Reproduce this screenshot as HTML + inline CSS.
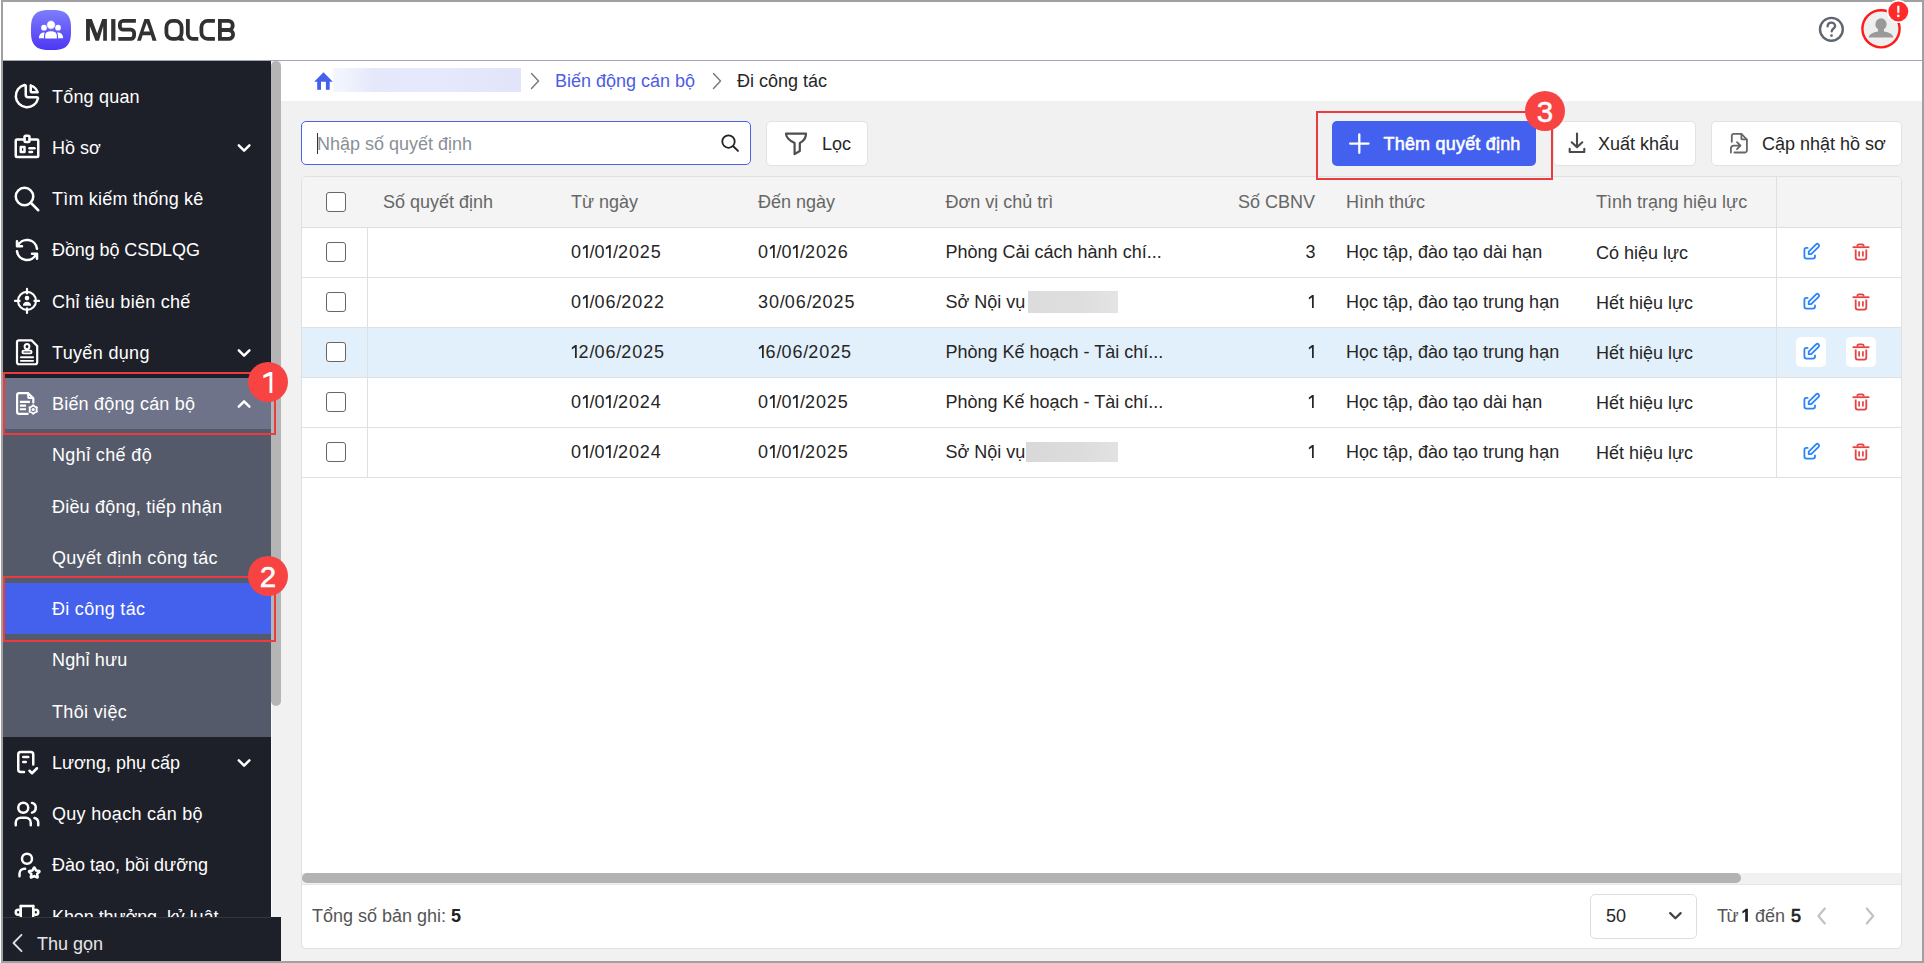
<!DOCTYPE html>
<html lang="vi"><head><meta charset="utf-8"><style>
*{box-sizing:border-box;margin:0;padding:0}
html,body{width:1924px;height:963px;overflow:hidden;background:#fff;font-family:"Liberation Sans",sans-serif;font-size:18px;color:#262626}
.a{position:absolute;white-space:nowrap}
.mt{color:#fff}
.badge{width:40px;height:40px;border-radius:20px;background:#f84343;color:#fff;font-size:29.5px;line-height:41px;text-align:center;-webkit-text-stroke:0.5px #fff}
</style></head><body>
<div class="a" style="left:0px;top:0px;width:1924px;height:963px;background:#fff"></div>
<div class="a" style="left:1px;top:0px;width:1923px;height:963px;border:2px solid #a0a0a0;background:#f1f1f1"></div>
<div class="a" style="left:3px;top:2px;width:1919px;height:58px;background:#fff"></div>
<div class="a" style="left:3px;top:60px;width:1919px;height:1px;background:#a4a5b5"></div>
<svg class="a" style="left:31px;top:10px" width="40" height="40" viewBox="0 0 40 40">
<defs><linearGradient id="lg" gradientUnits="userSpaceOnUse" x1="0" y1="0" x2="0" y2="40"><stop offset="0" stop-color="#7d7efc"/><stop offset="1" stop-color="#4d36f3"/></linearGradient></defs>
<path d="M40.00 20.00 L39.97 23.25 L39.89 25.15 L39.74 26.73 L39.54 28.12 L39.29 29.38 L38.97 30.54 L38.60 31.61 L38.17 32.60 L37.68 33.52 L37.14 34.37 L36.54 35.15 L35.87 35.87 L35.15 36.54 L34.37 37.14 L33.52 37.68 L32.60 38.17 L31.61 38.60 L30.54 38.97 L29.38 39.29 L28.12 39.54 L26.73 39.74 L25.15 39.89 L23.25 39.97 L20.00 40.00 L16.75 39.97 L14.85 39.89 L13.27 39.74 L11.88 39.54 L10.62 39.29 L9.46 38.97 L8.39 38.60 L7.40 38.17 L6.48 37.68 L5.63 37.14 L4.85 36.54 L4.13 35.87 L3.46 35.15 L2.86 34.37 L2.32 33.52 L1.83 32.60 L1.40 31.61 L1.03 30.54 L0.71 29.38 L0.46 28.12 L0.26 26.73 L0.11 25.15 L0.03 23.25 L0.00 20.00 L0.03 16.75 L0.11 14.85 L0.26 13.27 L0.46 11.88 L0.71 10.62 L1.03 9.46 L1.40 8.39 L1.83 7.40 L2.32 6.48 L2.86 5.63 L3.46 4.85 L4.13 4.13 L4.85 3.46 L5.63 2.86 L6.48 2.32 L7.40 1.83 L8.39 1.40 L9.46 1.03 L10.62 0.71 L11.88 0.46 L13.27 0.26 L14.85 0.11 L16.75 0.03 L20.00 0.00 L23.25 0.03 L25.15 0.11 L26.73 0.26 L28.12 0.46 L29.38 0.71 L30.54 1.03 L31.61 1.40 L32.60 1.83 L33.52 2.32 L34.37 2.86 L35.15 3.46 L35.87 4.13 L36.54 4.85 L37.14 5.63 L37.68 6.48 L38.17 7.40 L38.60 8.39 L38.97 9.46 L39.29 10.62 L39.54 11.88 L39.74 13.27 L39.89 14.85 L39.97 16.75Z" fill="url(#lg)"/>
<g fill="#fff">
<circle cx="13" cy="17.7" r="2.85"/><circle cx="27" cy="17.7" r="2.85"/>
<path d="M7.9 28.2C7.9 24.7 9.9 22.4 12.8 22.4 14.6 22.4 16 23.2 16.8 24.6V28.2Z"/>
<path d="M32.1 28.2C32.1 24.7 30.1 22.4 27.2 22.4 25.4 22.4 24 23.2 23.2 24.6V28.2Z"/>
<path d="M13.6 29.1V25.6C13.6 22.7 16.2 20.8 20 20.8S26.4 22.7 26.4 25.6V29.1Z" stroke="url(#lg)" stroke-width="1.1"/>
<circle cx="20" cy="14.9" r="4.3" stroke="url(#lg)" stroke-width="0.6"/>
</g></svg>
<svg class="a" style="left:80px;top:14px" width="160" height="32" viewBox="80 14 160 32"><g fill="#313131">
<path d="M86.05 40.75V19.07H91.8L97.2 33.4 102.2 19.07H106.9V40.75H103.2V26.2L98.9 40.75H95.5L89.9 26.2V40.75Z"/>
<rect x="111.2" y="19.07" width="4.2" height="21.68"/>
<path d="M137.1 40.75L144.4 19.07H149.3L156.6 40.75H152.5L150.9 35.2H142.6L140.9 40.75ZM143.6 31.6H149.8L146.7 22.9Z" fill-rule="evenodd"/>
<path d="M182 36.4L184.6 40.75H179.6L177.4 37.2Z"/>
</g><g fill="none" stroke="#313131" stroke-width="3.8">
<path d="M135.9 20.95H123.2a3.3 3.3 0 0 0 -3.3 3.3V26.4a3.3 3.3 0 0 0 3.3 3.3H130.8a3.3 3.3 0 0 1 3.3 3.3V35.5a3.3 3.3 0 0 1 -3.3 3.3H118.3"/>
<rect x="166.4" y="20.95" width="15.2" height="17.9" rx="6.2"/>
<path d="M187.85 19.07V33.8a5 5 0 0 0 5 5H198.3"/>
<path d="M214.9 20.95H207.6a6.2 6.2 0 0 0 -6.2 6.2V32.6a6.2 6.2 0 0 0 6.2 6.2H214.9"/>
<path d="M219.9 19.07V40.75M219.9 20.95H228.5a4.2 4.2 0 0 1 4.2 4.2v.65a4.2 4.2 0 0 1 -4.2 4.2H219.9M228 30H228.7a4.4 4.4 0 0 1 4.4 4.4v.05a4.4 4.4 0 0 1 -4.4 4.4H219.9"/>
</g></svg>
<svg class="a" style="left:1817px;top:15px" width="29" height="29" viewBox="0 0 29 29">
<circle cx="14.4" cy="14.3" r="11.4" fill="none" stroke="#5f6670" stroke-width="2.4"/>
<path d="M10.6 11.4c0-2.3 1.7-3.7 3.8-3.7s3.7 1.4 3.7 3.3c0 2.5-3.2 2.5-3.4 5.4" fill="none" stroke="#5f6670" stroke-width="2.3" stroke-linecap="round"/>
<circle cx="14.5" cy="20.6" r="1.4" fill="#5f6670"/></svg>
<svg class="a" style="left:1858px;top:6px" width="48" height="48" viewBox="1858 6 48 48">
<circle cx="1881" cy="28.8" r="18.6" fill="#efefef" stroke="#ff1a1a" stroke-width="2.4"/>
<ellipse cx="1881" cy="24.2" rx="5.6" ry="5.9" fill="#999"/>
<path d="M1868.6 37.4C1869.6 33.3 1874.6 31.4 1881 31.4S1892.4 33.3 1893.4 37.4Z" fill="#999"/>
<rect x="1878" y="27" width="6" height="5.5" fill="#999"/>
</svg>
<svg class="a" style="left:1886px;top:0px" width="26" height="24" viewBox="0 0 26 24">
<circle cx="12.3" cy="11.5" r="10.8" fill="#ff2b2b" stroke="#fff" stroke-width="1.6"/>
<rect x="11.2" y="5.6" width="2.2" height="7.6" rx="1.1" fill="#fff"/><circle cx="12.3" cy="15.9" r="1.3" fill="#fff"/>
</svg>
<div class="a" style="left:3px;top:61px;width:268px;height:856px;background:#1e2029"></div>
<div class="a" style="left:3px;top:378px;width:268px;height:51.25px;background:#6e7389"></div>
<div class="a" style="left:3px;top:429.25px;width:268px;height:307.5px;background:#545a69"></div>
<div class="a" style="left:3px;top:583px;width:268px;height:51.25px;background:#4361ec"></div>
<div class="a mt" style="left:52px;top:71.5px;height:51.25px;line-height:51.25px;letter-spacing:0.19px">Tổng quan</div>
<svg class="a" style="left:12px;top:81.1px" width="30" height="30" viewBox="0 0 24 24" fill="none" stroke="#fff" stroke-width="2" stroke-linecap="round" stroke-linejoin="round"><path d="M10 3.2a9 9 0 1 0 10.8 10.8a1 1 0 0 0 -1 -1h-6.8a2 2 0 0 1 -2 -2v-7a.9 .9 0 0 0 -1 -.8"/><path d="M15 3.5a9 9 0 0 1 5.5 5.5h-4.5a1 1 0 0 1 -1 -1v-4.5"/></svg>
<div class="a mt" style="left:52px;top:122.75px;height:51.25px;line-height:51.25px;letter-spacing:0px">Hồ sơ</div>
<svg class="a" style="left:12px;top:132.35px" width="30" height="30" viewBox="0 0 24 24" fill="none" stroke="#fff" stroke-width="2" stroke-linecap="round" stroke-linejoin="round"><path d="M7 12h3v4h-3z"/><path d="M10 6h-6a1 1 0 0 0 -1 1v12a1 1 0 0 0 1 1h16a1 1 0 0 0 1 -1v-12a1 1 0 0 0 -1 -1h-6"/><path d="M10 4a1 1 0 0 1 1 -1h2a1 1 0 0 1 1 1v3a1 1 0 0 1 -1 1h-2a1 1 0 0 1 -1 -1z"/><path d="M14 13h4"/><path d="M14 16h2"/></svg>
<svg class="a" style="left:231.8px;top:135.75px" width="24" height="24" viewBox="0 0 24 24"><path d="M6.8 9.3l5.3 5.3l5.3 -5.3" fill="none" stroke="#fff" stroke-width="2.5" stroke-linecap="round" stroke-linejoin="round"/></svg>
<div class="a mt" style="left:52px;top:174.0px;height:51.25px;line-height:51.25px;letter-spacing:0.2px">Tìm kiếm thống kê</div>
<svg class="a" style="left:12px;top:183.6px" width="30" height="30" viewBox="0 0 24 24" fill="none" stroke="#fff" stroke-width="2" stroke-linecap="round" stroke-linejoin="round"><circle cx="10" cy="10" r="7"/><path d="M21 21l-6 -6"/></svg>
<div class="a mt" style="left:52px;top:225.25px;height:51.25px;line-height:51.25px;letter-spacing:-0.09px">Đồng bộ CSDLQG</div>
<svg class="a" style="left:12px;top:234.85px" width="30" height="30" viewBox="0 0 24 24" fill="none" stroke="#fff" stroke-width="2" stroke-linecap="round" stroke-linejoin="round"><path d="M20 11a8.1 8.1 0 0 0 -15.5 -2m-.5 -4v4h4"/><path d="M4 13a8.1 8.1 0 0 0 15.5 2m.5 4v-4h-4"/></svg>
<div class="a mt" style="left:52px;top:276.5px;height:51.25px;line-height:51.25px;letter-spacing:0.26px">Chỉ tiêu biên chế</div>
<svg class="a" style="left:8px;top:275.5px" width="40" height="51.25" viewBox="8 275.5 40 51.25" fill="none" stroke="#fff" stroke-width="2" stroke-linecap="round" stroke-linejoin="round"><circle cx="27" cy="300.4" r="9" stroke-width="2.1"/><path d="M27 288.4v4.6M27 307.8v4.6M15 300.4h4.6M34.4 300.4h4.6" stroke-width="2.2"/><circle cx="27" cy="297.6" r="2.3" fill="#fff" stroke="none"/><path d="M22.9 305.3c0-2.6 1.8-4 4.1-4s4.1 1.4 4.1 4z" fill="#fff" stroke="none"/></svg>
<div class="a mt" style="left:52px;top:327.75px;height:51.25px;line-height:51.25px;letter-spacing:0.34px">Tuyển dụng</div>
<svg class="a" style="left:8px;top:326.75px" width="40" height="51.25" viewBox="8 326.75 40 51.25" fill="none" stroke="#fff" stroke-width="2" stroke-linecap="round" stroke-linejoin="round"><path d="M17 342.1a2 2 0 0 1 2 -2h12.6l5.6 5.6v16.3a2 2 0 0 1 -2 2H19a2 2 0 0 1 -2 -2z" stroke-width="2.2"/><ellipse cx="27" cy="346.3" rx="2.4" ry="2.6" stroke-width="2"/><rect x="22.4" y="350.4" width="9.2" height="2.7" rx="1.35" stroke-width="1.9"/><path d="M20.9 357h12.2M20.9 360.6h12.2" stroke-width="1.9"/></svg>
<svg class="a" style="left:231.8px;top:340.75px" width="24" height="24" viewBox="0 0 24 24"><path d="M6.8 9.3l5.3 5.3l5.3 -5.3" fill="none" stroke="#fff" stroke-width="2.5" stroke-linecap="round" stroke-linejoin="round"/></svg>
<div class="a mt" style="left:52px;top:379.0px;height:51.25px;line-height:51.25px;letter-spacing:0.19px">Biến động cán bộ</div>
<svg class="a" style="left:8px;top:378.0px" width="40" height="51.25" viewBox="8 378.0 40 51.25" fill="none" stroke="#fff" stroke-width="2" stroke-linecap="round" stroke-linejoin="round"><path d="M27.6 413.9H19.2a2.1 2.1 0 0 1 -2.1 -2.1V395.3a2.1 2.1 0 0 1 2.1 -2.1h9l5.1 5.1v4.3" stroke-width="2.2"/><path d="M28.2 393.4v3.8a.8 .8 0 0 0 .8 .8h4.1" stroke-width="2"/><path d="M19.9 401.9h10M19.9 405.6h6.1M19.9 409.2h6.1" stroke-width="2.1" stroke-linecap="butt"/><path d="M33.20,405.20 L34.85,406.64 L36.92,407.35 L36.50,409.50 L36.92,411.65 L34.85,412.36 L33.20,413.80 L31.55,412.36 L29.48,411.65 L29.90,409.50 L29.48,407.35 L31.55,406.64Z" stroke-width="1.9"/><circle cx="33.2" cy="409.5" r="1.6" fill="#fff" stroke="none"/></svg>
<svg class="a" style="left:231.8px;top:391.8px" width="24" height="24" viewBox="0 0 24 24"><path d="M6.8 14.7l5.3 -5.3l5.3 5.3" fill="none" stroke="#fff" stroke-width="2.5" stroke-linecap="round" stroke-linejoin="round"/></svg>
<div class="a mt" style="left:52px;top:430.25px;height:51.25px;line-height:51.25px;letter-spacing:0.37px">Nghỉ chế độ</div>
<div class="a mt" style="left:52px;top:481.5px;height:51.25px;line-height:51.25px;letter-spacing:0.2px">Điều động, tiếp nhận</div>
<div class="a mt" style="left:52px;top:532.75px;height:51.25px;line-height:51.25px;letter-spacing:0.3px">Quyết định công tác</div>
<div class="a mt" style="left:52px;top:584.0px;height:51.25px;line-height:51.25px;letter-spacing:0.29px">Đi công tác</div>
<div class="a mt" style="left:52px;top:635.25px;height:51.25px;line-height:51.25px;letter-spacing:0.17px">Nghỉ hưu</div>
<div class="a mt" style="left:52px;top:686.5px;height:51.25px;line-height:51.25px;letter-spacing:0.35px">Thôi việc</div>
<div class="a mt" style="left:52px;top:737.75px;height:51.25px;line-height:51.25px;letter-spacing:0px">Lương, phụ cấp</div>
<svg class="a" style="left:12px;top:747.35px" width="30" height="30" viewBox="0 0 24 24" fill="none" stroke="#fff" stroke-width="2" stroke-linecap="round" stroke-linejoin="round"><path d="M9.615 20h-2.615a2 2 0 0 1 -2 -2v-12a2 2 0 0 1 2 -2h8a2 2 0 0 1 2 2v8"/><path d="M14 19l2 2l4 -4"/><path d="M9 8h4"/><path d="M9 12h2"/></svg>
<svg class="a" style="left:231.8px;top:750.75px" width="24" height="24" viewBox="0 0 24 24"><path d="M6.8 9.3l5.3 5.3l5.3 -5.3" fill="none" stroke="#fff" stroke-width="2.5" stroke-linecap="round" stroke-linejoin="round"/></svg>
<div class="a mt" style="left:52px;top:789.0px;height:51.25px;line-height:51.25px;letter-spacing:0.3px">Quy hoạch cán bộ</div>
<svg class="a" style="left:12px;top:798.6px" width="30" height="30" viewBox="0 0 24 24" fill="none" stroke="#fff" stroke-width="2" stroke-linecap="round" stroke-linejoin="round"><circle cx="9" cy="7" r="4"/><path d="M3 21v-2a4 4 0 0 1 4 -4h4a4 4 0 0 1 4 4v2"/><path d="M16 3.13a4 4 0 0 1 0 7.75"/><path d="M21 21v-2a4 4 0 0 0 -3 -3.85"/></svg>
<div class="a mt" style="left:52px;top:840.25px;height:51.25px;line-height:51.25px;letter-spacing:0px">Đào tạo, bồi dưỡng</div>
<svg class="a" style="left:12px;top:849.85px" width="30" height="30" viewBox="0 0 24 24" fill="none" stroke="#fff" stroke-width="2" stroke-linecap="round" stroke-linejoin="round"><path d="M8 7a4 4 0 1 0 8 0a4 4 0 0 0 -8 0"/><path d="M6 21v-2a4 4 0 0 1 4 -4h.5"/><path d="M17.8 20.817l-2.172 1.138a.392 .392 0 0 1 -.568 -.41l.415 -2.411l-1.757 -1.707a.389 .389 0 0 1 .217 -.665l2.428 -.352l1.086 -2.193a.392 .392 0 0 1 .702 0l1.086 2.193l2.428 .352a.39 .39 0 0 1 .217 .665l-1.757 1.707l.414 2.41a.39 .39 0 0 1 -.567 .411z"/></svg>
<div class="a mt" style="left:52px;top:891.5px;height:51.25px;line-height:51.25px;letter-spacing:-0.08px">Khen thưởng, kỷ luật</div>
<svg class="a" style="left:12px;top:901.1px" width="30" height="30" viewBox="0 0 24 24" fill="none" stroke="#fff" stroke-width="2" stroke-linecap="round" stroke-linejoin="round"><path d="M8 21l8 0"/><path d="M12 17l0 4"/><path d="M7 4l10 0"/><path d="M17 4v8a5 5 0 0 1 -10 0v-8"/><circle cx="5" cy="9" r="2"/><circle cx="19" cy="9" r="2"/></svg>
<div class="a" style="left:271px;top:61px;width:10px;height:856px;background:#f1f1f1"></div>
<div class="a" style="left:271px;top:61px;width:1px;height:856px;background:#fafafa"></div>
<div class="a" style="left:271px;top:61px;width:10px;height:645px;background:#b5b5b5;border-radius:5px"></div>
<div class="a" style="left:3px;top:917px;width:278px;height:44px;background:#1e2029"></div>
<div class="a" style="left:3px;top:917px;width:268px;height:1px;background:#34363d"></div>
<svg class="a" style="left:11px;top:933px" width="14" height="20" viewBox="0 0 14 20"><path d="M10.5 1.8L2.5 10l8 8.2" fill="none" stroke="#e0e0e0" stroke-width="1.8" stroke-linecap="round" stroke-linejoin="round"/></svg>
<div class="a" style="left:37px;top:922px;line-height:44px;color:#e6e6e6">Thu gọn</div>
<div class="a" style="left:281px;top:61px;width:1641px;height:40px;background:#fff"></div>
<svg class="a" style="left:313px;top:71px" width="21" height="20" viewBox="0 0 21 20"><path d="M1.2 10.8L10.5 1.2 19.8 10.8z" fill="#4361ee"/><rect x="4.2" y="10" width="3.8" height="8.8" fill="#4361ee"/><rect x="12.9" y="10" width="3.8" height="8.8" fill="#4361ee"/></svg>
<div class="a" style="left:333px;top:68px;width:188px;height:24px;background:linear-gradient(90deg,#f5f7fe 0%,#e5e8fa 22%,#e6e9fb 55%,#e2e5f9 100%)"></div>
<svg class="a" style="left:530px;top:72px" width="10" height="18" viewBox="0 0 10 18"><path d="M1.5 1.5L8.5 9l-7 7.5" fill="none" stroke="#777" stroke-width="1.4" stroke-linecap="round" stroke-linejoin="round"/></svg>
<div class="a" style="left:555px;top:61px;line-height:40px;color:#4c5ce5">Biến động cán bộ</div>
<svg class="a" style="left:712px;top:72px" width="10" height="18" viewBox="0 0 10 18"><path d="M1.5 1.5L8.5 9l-7 7.5" fill="none" stroke="#777" stroke-width="1.4" stroke-linecap="round" stroke-linejoin="round"/></svg>
<div class="a" style="left:737px;top:61px;line-height:40px;color:#262626">Đi công tác</div>
<div class="a" style="left:301px;top:121px;width:450px;height:44px;background:#fff;border:1px solid #4a63e8;border-radius:5px"></div>
<div class="a" style="left:317px;top:133px;width:1px;height:21px;background:#333"></div>
<div class="a" style="left:317px;top:122px;line-height:44px;color:#8b8f97">Nhập số quyết định</div>
<svg class="a" style="left:719px;top:132px" width="22" height="22" viewBox="0 0 22 22"><circle cx="9.5" cy="9.6" r="6.2" fill="none" stroke="#222" stroke-width="1.8"/><path d="M14.2 14.3l4.8 4.6" stroke="#222" stroke-width="1.9" stroke-linecap="round"/></svg>
<div class="a" style="left:766px;top:121px;width:102px;height:45px;background:#fff;border:1px solid #e3e3e3;border-radius:5px"></div>
<svg class="a" style="left:783px;top:131px" width="26" height="26" viewBox="0 0 26 26"><path d="M3 2.6h20c0 5.6-3.3 8-6.2 9.4v8l-5.2 3.1V12C8.6 10.6 3 8.2 3 2.6z" fill="none" stroke="#4e4e4e" stroke-width="2.2" stroke-linejoin="round"/></svg>
<div class="a" style="left:822px;top:122px;line-height:44px;color:#262626">Lọc</div>
<div class="a" style="left:1332px;top:121px;width:204px;height:45px;background:#4361ee;border-radius:5px"></div>
<svg class="a" style="left:1340px;top:125px" width="40" height="40" viewBox="1340 125 40 40"><path d="M1359.3 134.4V152.8M1350.1 143.6H1368.5" stroke="#fff" stroke-width="2.3" stroke-linecap="round"/></svg>
<div class="a" style="left:1383.5px;top:121.5px;line-height:44px;color:#fff;font-size:18px;-webkit-text-stroke:0.55px #fff;letter-spacing:0.2px">Thêm quyết định</div>
<div class="a" style="left:1553px;top:121px;width:143px;height:45px;background:#fff;border:1px solid #e3e3e3;border-radius:5px"></div>
<svg class="a" style="left:1560px;top:125px" width="40" height="40" viewBox="1560 125 40 40"><path d="M1577 133.6V147M1571.7 142.3L1577 147.3 1582.3 142.3M1569.7 148.8V152H1584.3V148.8" fill="none" stroke="#4a4a4a" stroke-width="2.1" stroke-linecap="round" stroke-linejoin="round"/></svg>
<div class="a" style="left:1598px;top:122px;line-height:44px;color:#262626">Xuất khẩu</div>
<div class="a" style="left:1711px;top:121px;width:191px;height:45px;background:#fff;border:1px solid #e3e3e3;border-radius:5px"></div>
<svg class="a" style="left:1720px;top:125px" width="40" height="40" viewBox="1720 125 40 40"><g fill="none" stroke="#666" stroke-width="1.8" stroke-linecap="round" stroke-linejoin="round"><path d="M1731.8 141.8V135.8a1.9 1.9 0 0 1 1.9 -1.9H1741.4L1746.9 139.6V150.6a1.9 1.9 0 0 1 -1.9 1.9H1734.4"/><path d="M1741.4 134.1V138.4a1 1 0 0 0 1 1H1746.7"/><path d="M1730.9 152.6V148.7a3 3 0 0 1 3 -3H1740.3M1737 142.2L1740.5 145.7 1737 149.2"/></g></svg>
<div class="a" style="left:1762px;top:122px;line-height:44px;color:#262626">Cập nhật hồ sơ</div>
<div class="a" style="left:301px;top:176px;width:1601px;height:773px;background:#fff;border:1px solid #e0e0e0;border-radius:5px"></div>
<div class="a" style="left:302px;top:177px;width:1599px;height:50px;background:#f4f4f4;border-radius:4px 4px 0 0"></div>
<div class="a" style="left:302px;top:227px;width:1599px;height:1px;background:#dedede"></div>
<div class="a" style="left:326px;top:192px;width:20px;height:20px;border:1px solid #666;border-radius:3px;background:#fff"></div>
<div class="a" style="left:383px;top:177px;line-height:50px;color:#666">Số quyết định</div>
<div class="a" style="left:571px;top:177px;line-height:50px;color:#666">Từ ngày</div>
<div class="a" style="left:758px;top:177px;line-height:50px;color:#666">Đến ngày</div>
<div class="a" style="left:945.5px;top:177px;line-height:50px;color:#666">Đơn vị chủ trì</div>
<div class="a" style="left:1346px;top:177px;line-height:50px;color:#666">Hình thức</div>
<div class="a" style="left:1596px;top:177px;line-height:50px;color:#666">Tình trạng hiệu lực</div>
<div class="a" style="left:1115px;width:200px;text-align:right;top:177px;line-height:50px;color:#666">Số CBNV</div>
<div class="a" style="left:1776px;top:177px;width:1px;height:50px;background:#e0e0e0"></div>
<div class="a" style="left:302px;top:228px;width:1599px;height:49px;background:#fff"></div>
<div class="a" style="left:302px;top:277px;width:1599px;height:1px;background:#e0e0e0"></div>
<div class="a" style="left:367px;top:228px;width:1px;height:49px;background:#e0e0e0"></div>
<div class="a" style="left:1776px;top:228px;width:1px;height:49px;background:#e0e0e0"></div>
<div class="a" style="left:326px;top:242px;width:20px;height:20px;border:1px solid #666;border-radius:3px;background:#fff"></div>
<div class="a" style="left:571px;top:228px;line-height:49px"><span style="letter-spacing:0.89px">0</span><svg style="display:inline-block;vertical-align:baseline" width="7.6" height="13" viewBox="0 0 7.6 13"><path d="M4 0H5.75V13H4V2.5L0.85 4.5V2.5L3.8 0.2Z" fill="#262626"/></svg>/<span style="letter-spacing:0.89px">0</span><svg style="display:inline-block;vertical-align:baseline" width="7.6" height="13" viewBox="0 0 7.6 13"><path d="M4 0H5.75V13H4V2.5L0.85 4.5V2.5L3.8 0.2Z" fill="#262626"/></svg>/<span style="letter-spacing:0.89px">2</span><span style="letter-spacing:0.89px">0</span><span style="letter-spacing:0.89px">2</span><span style="letter-spacing:0.89px">5</span></div>
<div class="a" style="left:758px;top:228px;line-height:49px"><span style="letter-spacing:0.89px">0</span><svg style="display:inline-block;vertical-align:baseline" width="7.6" height="13" viewBox="0 0 7.6 13"><path d="M4 0H5.75V13H4V2.5L0.85 4.5V2.5L3.8 0.2Z" fill="#262626"/></svg>/<span style="letter-spacing:0.89px">0</span><svg style="display:inline-block;vertical-align:baseline" width="7.6" height="13" viewBox="0 0 7.6 13"><path d="M4 0H5.75V13H4V2.5L0.85 4.5V2.5L3.8 0.2Z" fill="#262626"/></svg>/<span style="letter-spacing:0.89px">2</span><span style="letter-spacing:0.89px">0</span><span style="letter-spacing:0.89px">2</span><span style="letter-spacing:0.89px">6</span></div>
<div class="a" style="left:945.5px;top:228px;line-height:49px">Phòng Cải cách hành chí...</div>
<div class="a" style="left:1346px;top:228px;line-height:49px">Học tập, đào tạo dài hạn</div>
<div class="a" style="left:1596px;top:229px;line-height:49px">Có hiệu lực</div>
<div class="a" style="left:1215px;width:100.5px;text-align:right;top:228px;line-height:49px">3</div>
<svg class="a" style="left:1795px;top:228px" width="80" height="50" viewBox="1795 228 80 50"><g fill="none" stroke="#2a86f7" stroke-width="1.8" stroke-linecap="round" stroke-linejoin="round"><path d="M1807.6 247.9H1806.4a2 2 0 0 0 -2 2V256.6a2 2 0 0 0 2 2H1813a2 2 0 0 0 2 -2V255.4"/><path d="M1808.7 254.2v-2.5l7.4 -7.4a1.75 1.75 0 0 1 2.5 2.5l-7.4 7.4z"/></g><g fill="none" stroke="#e84141" stroke-width="1.8"><path d="M1852.6 247.2H1869.4"/><path d="M1857.3 246.6v-.4a1.8 1.8 0 0 1 1.8 -1.8h2.8a1.8 1.8 0 0 1 1.8 1.8v.4"/><path d="M1855.7 249.4V257.6a2 2 0 0 0 2 2h6.6a2 2 0 0 0 2 -2V249.4"/><path d="M1859.1 251.2v5.4M1862.9 251.2v5.4" stroke-width="1.7"/></g></svg>
<div class="a" style="left:302px;top:278px;width:1599px;height:49px;background:#fff"></div>
<div class="a" style="left:302px;top:327px;width:1599px;height:1px;background:#e0e0e0"></div>
<div class="a" style="left:367px;top:278px;width:1px;height:49px;background:#e0e0e0"></div>
<div class="a" style="left:1776px;top:278px;width:1px;height:49px;background:#e0e0e0"></div>
<div class="a" style="left:326px;top:292px;width:20px;height:20px;border:1px solid #666;border-radius:3px;background:#fff"></div>
<div class="a" style="left:571px;top:278px;line-height:49px"><span style="letter-spacing:0.89px">0</span><svg style="display:inline-block;vertical-align:baseline" width="7.6" height="13" viewBox="0 0 7.6 13"><path d="M4 0H5.75V13H4V2.5L0.85 4.5V2.5L3.8 0.2Z" fill="#262626"/></svg>/<span style="letter-spacing:0.89px">0</span><span style="letter-spacing:0.89px">6</span>/<span style="letter-spacing:0.89px">2</span><span style="letter-spacing:0.89px">0</span><span style="letter-spacing:0.89px">2</span><span style="letter-spacing:0.89px">2</span></div>
<div class="a" style="left:758px;top:278px;line-height:49px"><span style="letter-spacing:0.89px">3</span><span style="letter-spacing:0.89px">0</span>/<span style="letter-spacing:0.89px">0</span><span style="letter-spacing:0.89px">6</span>/<span style="letter-spacing:0.89px">2</span><span style="letter-spacing:0.89px">0</span><span style="letter-spacing:0.89px">2</span><span style="letter-spacing:0.89px">5</span></div>
<div class="a" style="left:945.5px;top:278px;line-height:49px">Sở Nội vụ</div>
<div class="a" style="left:1346px;top:278px;line-height:49px">Học tập, đào tạo trung hạn</div>
<div class="a" style="left:1596px;top:279px;line-height:49px">Hết hiệu lực</div>
<div class="a" style="left:1215px;width:100.2px;text-align:right;top:278px;line-height:49px"><svg style="display:inline-block;vertical-align:baseline" width="7.6" height="13" viewBox="0 0 7.6 13"><path d="M4 0H5.75V13H4V2.5L0.85 4.5V2.5L3.8 0.2Z" fill="#262626"/></svg></div>
<div class="a" style="left:1028px;top:291px;width:90px;height:22px;background:linear-gradient(90deg,#dcdcdc,#dedede 60%,#e4e4e4)"></div>
<svg class="a" style="left:1795px;top:278px" width="80" height="50" viewBox="1795 228 80 50"><g fill="none" stroke="#2a86f7" stroke-width="1.8" stroke-linecap="round" stroke-linejoin="round"><path d="M1807.6 247.9H1806.4a2 2 0 0 0 -2 2V256.6a2 2 0 0 0 2 2H1813a2 2 0 0 0 2 -2V255.4"/><path d="M1808.7 254.2v-2.5l7.4 -7.4a1.75 1.75 0 0 1 2.5 2.5l-7.4 7.4z"/></g><g fill="none" stroke="#e84141" stroke-width="1.8"><path d="M1852.6 247.2H1869.4"/><path d="M1857.3 246.6v-.4a1.8 1.8 0 0 1 1.8 -1.8h2.8a1.8 1.8 0 0 1 1.8 1.8v.4"/><path d="M1855.7 249.4V257.6a2 2 0 0 0 2 2h6.6a2 2 0 0 0 2 -2V249.4"/><path d="M1859.1 251.2v5.4M1862.9 251.2v5.4" stroke-width="1.7"/></g></svg>
<div class="a" style="left:302px;top:328px;width:1599px;height:49px;background:#e2f0fb"></div>
<div class="a" style="left:302px;top:377px;width:1599px;height:1px;background:#e0e0e0"></div>
<div class="a" style="left:367px;top:328px;width:1px;height:49px;background:#e0e0e0"></div>
<div class="a" style="left:1776px;top:328px;width:1px;height:49px;background:#e0e0e0"></div>
<div class="a" style="left:326px;top:342px;width:20px;height:20px;border:1px solid #666;border-radius:3px;background:#fff"></div>
<div class="a" style="left:571px;top:328px;line-height:49px"><svg style="display:inline-block;vertical-align:baseline" width="7.6" height="13" viewBox="0 0 7.6 13"><path d="M4 0H5.75V13H4V2.5L0.85 4.5V2.5L3.8 0.2Z" fill="#262626"/></svg><span style="letter-spacing:0.89px">2</span>/<span style="letter-spacing:0.89px">0</span><span style="letter-spacing:0.89px">6</span>/<span style="letter-spacing:0.89px">2</span><span style="letter-spacing:0.89px">0</span><span style="letter-spacing:0.89px">2</span><span style="letter-spacing:0.89px">5</span></div>
<div class="a" style="left:758px;top:328px;line-height:49px"><svg style="display:inline-block;vertical-align:baseline" width="7.6" height="13" viewBox="0 0 7.6 13"><path d="M4 0H5.75V13H4V2.5L0.85 4.5V2.5L3.8 0.2Z" fill="#262626"/></svg><span style="letter-spacing:0.89px">6</span>/<span style="letter-spacing:0.89px">0</span><span style="letter-spacing:0.89px">6</span>/<span style="letter-spacing:0.89px">2</span><span style="letter-spacing:0.89px">0</span><span style="letter-spacing:0.89px">2</span><span style="letter-spacing:0.89px">5</span></div>
<div class="a" style="left:945.5px;top:328px;line-height:49px">Phòng Kế hoạch - Tài chí...</div>
<div class="a" style="left:1346px;top:328px;line-height:49px">Học tập, đào tạo trung hạn</div>
<div class="a" style="left:1596px;top:329px;line-height:49px">Hết hiệu lực</div>
<div class="a" style="left:1215px;width:100.2px;text-align:right;top:328px;line-height:49px"><svg style="display:inline-block;vertical-align:baseline" width="7.6" height="13" viewBox="0 0 7.6 13"><path d="M4 0H5.75V13H4V2.5L0.85 4.5V2.5L3.8 0.2Z" fill="#262626"/></svg></div>
<div class="a" style="left:1796px;top:337px;width:30px;height:30px;background:#fff;border-radius:5px"></div>
<div class="a" style="left:1846px;top:337px;width:30px;height:30px;background:#fff;border-radius:5px"></div>
<svg class="a" style="left:1795px;top:328px" width="80" height="50" viewBox="1795 228 80 50"><g fill="none" stroke="#2a86f7" stroke-width="1.8" stroke-linecap="round" stroke-linejoin="round"><path d="M1807.6 247.9H1806.4a2 2 0 0 0 -2 2V256.6a2 2 0 0 0 2 2H1813a2 2 0 0 0 2 -2V255.4"/><path d="M1808.7 254.2v-2.5l7.4 -7.4a1.75 1.75 0 0 1 2.5 2.5l-7.4 7.4z"/></g><g fill="none" stroke="#e84141" stroke-width="1.8"><path d="M1852.6 247.2H1869.4"/><path d="M1857.3 246.6v-.4a1.8 1.8 0 0 1 1.8 -1.8h2.8a1.8 1.8 0 0 1 1.8 1.8v.4"/><path d="M1855.7 249.4V257.6a2 2 0 0 0 2 2h6.6a2 2 0 0 0 2 -2V249.4"/><path d="M1859.1 251.2v5.4M1862.9 251.2v5.4" stroke-width="1.7"/></g></svg>
<div class="a" style="left:302px;top:378px;width:1599px;height:49px;background:#fff"></div>
<div class="a" style="left:302px;top:427px;width:1599px;height:1px;background:#e0e0e0"></div>
<div class="a" style="left:367px;top:378px;width:1px;height:49px;background:#e0e0e0"></div>
<div class="a" style="left:1776px;top:378px;width:1px;height:49px;background:#e0e0e0"></div>
<div class="a" style="left:326px;top:392px;width:20px;height:20px;border:1px solid #666;border-radius:3px;background:#fff"></div>
<div class="a" style="left:571px;top:378px;line-height:49px"><span style="letter-spacing:0.89px">0</span><svg style="display:inline-block;vertical-align:baseline" width="7.6" height="13" viewBox="0 0 7.6 13"><path d="M4 0H5.75V13H4V2.5L0.85 4.5V2.5L3.8 0.2Z" fill="#262626"/></svg>/<span style="letter-spacing:0.89px">0</span><svg style="display:inline-block;vertical-align:baseline" width="7.6" height="13" viewBox="0 0 7.6 13"><path d="M4 0H5.75V13H4V2.5L0.85 4.5V2.5L3.8 0.2Z" fill="#262626"/></svg>/<span style="letter-spacing:0.89px">2</span><span style="letter-spacing:0.89px">0</span><span style="letter-spacing:0.89px">2</span><span style="letter-spacing:0.89px">4</span></div>
<div class="a" style="left:758px;top:378px;line-height:49px"><span style="letter-spacing:0.89px">0</span><svg style="display:inline-block;vertical-align:baseline" width="7.6" height="13" viewBox="0 0 7.6 13"><path d="M4 0H5.75V13H4V2.5L0.85 4.5V2.5L3.8 0.2Z" fill="#262626"/></svg>/<span style="letter-spacing:0.89px">0</span><svg style="display:inline-block;vertical-align:baseline" width="7.6" height="13" viewBox="0 0 7.6 13"><path d="M4 0H5.75V13H4V2.5L0.85 4.5V2.5L3.8 0.2Z" fill="#262626"/></svg>/<span style="letter-spacing:0.89px">2</span><span style="letter-spacing:0.89px">0</span><span style="letter-spacing:0.89px">2</span><span style="letter-spacing:0.89px">5</span></div>
<div class="a" style="left:945.5px;top:378px;line-height:49px">Phòng Kế hoạch - Tài chí...</div>
<div class="a" style="left:1346px;top:378px;line-height:49px">Học tập, đào tạo dài hạn</div>
<div class="a" style="left:1596px;top:379px;line-height:49px">Hết hiệu lực</div>
<div class="a" style="left:1215px;width:100.2px;text-align:right;top:378px;line-height:49px"><svg style="display:inline-block;vertical-align:baseline" width="7.6" height="13" viewBox="0 0 7.6 13"><path d="M4 0H5.75V13H4V2.5L0.85 4.5V2.5L3.8 0.2Z" fill="#262626"/></svg></div>
<svg class="a" style="left:1795px;top:378px" width="80" height="50" viewBox="1795 228 80 50"><g fill="none" stroke="#2a86f7" stroke-width="1.8" stroke-linecap="round" stroke-linejoin="round"><path d="M1807.6 247.9H1806.4a2 2 0 0 0 -2 2V256.6a2 2 0 0 0 2 2H1813a2 2 0 0 0 2 -2V255.4"/><path d="M1808.7 254.2v-2.5l7.4 -7.4a1.75 1.75 0 0 1 2.5 2.5l-7.4 7.4z"/></g><g fill="none" stroke="#e84141" stroke-width="1.8"><path d="M1852.6 247.2H1869.4"/><path d="M1857.3 246.6v-.4a1.8 1.8 0 0 1 1.8 -1.8h2.8a1.8 1.8 0 0 1 1.8 1.8v.4"/><path d="M1855.7 249.4V257.6a2 2 0 0 0 2 2h6.6a2 2 0 0 0 2 -2V249.4"/><path d="M1859.1 251.2v5.4M1862.9 251.2v5.4" stroke-width="1.7"/></g></svg>
<div class="a" style="left:302px;top:428px;width:1599px;height:49px;background:#fff"></div>
<div class="a" style="left:302px;top:477px;width:1599px;height:1px;background:#e0e0e0"></div>
<div class="a" style="left:367px;top:428px;width:1px;height:49px;background:#e0e0e0"></div>
<div class="a" style="left:1776px;top:428px;width:1px;height:49px;background:#e0e0e0"></div>
<div class="a" style="left:326px;top:442px;width:20px;height:20px;border:1px solid #666;border-radius:3px;background:#fff"></div>
<div class="a" style="left:571px;top:428px;line-height:49px"><span style="letter-spacing:0.89px">0</span><svg style="display:inline-block;vertical-align:baseline" width="7.6" height="13" viewBox="0 0 7.6 13"><path d="M4 0H5.75V13H4V2.5L0.85 4.5V2.5L3.8 0.2Z" fill="#262626"/></svg>/<span style="letter-spacing:0.89px">0</span><svg style="display:inline-block;vertical-align:baseline" width="7.6" height="13" viewBox="0 0 7.6 13"><path d="M4 0H5.75V13H4V2.5L0.85 4.5V2.5L3.8 0.2Z" fill="#262626"/></svg>/<span style="letter-spacing:0.89px">2</span><span style="letter-spacing:0.89px">0</span><span style="letter-spacing:0.89px">2</span><span style="letter-spacing:0.89px">4</span></div>
<div class="a" style="left:758px;top:428px;line-height:49px"><span style="letter-spacing:0.89px">0</span><svg style="display:inline-block;vertical-align:baseline" width="7.6" height="13" viewBox="0 0 7.6 13"><path d="M4 0H5.75V13H4V2.5L0.85 4.5V2.5L3.8 0.2Z" fill="#262626"/></svg>/<span style="letter-spacing:0.89px">0</span><svg style="display:inline-block;vertical-align:baseline" width="7.6" height="13" viewBox="0 0 7.6 13"><path d="M4 0H5.75V13H4V2.5L0.85 4.5V2.5L3.8 0.2Z" fill="#262626"/></svg>/<span style="letter-spacing:0.89px">2</span><span style="letter-spacing:0.89px">0</span><span style="letter-spacing:0.89px">2</span><span style="letter-spacing:0.89px">5</span></div>
<div class="a" style="left:945.5px;top:428px;line-height:49px">Sở Nội vụ</div>
<div class="a" style="left:1346px;top:428px;line-height:49px">Học tập, đào tạo trung hạn</div>
<div class="a" style="left:1596px;top:429px;line-height:49px">Hết hiệu lực</div>
<div class="a" style="left:1215px;width:100.2px;text-align:right;top:428px;line-height:49px"><svg style="display:inline-block;vertical-align:baseline" width="7.6" height="13" viewBox="0 0 7.6 13"><path d="M4 0H5.75V13H4V2.5L0.85 4.5V2.5L3.8 0.2Z" fill="#262626"/></svg></div>
<div class="a" style="left:1026px;top:442px;width:92px;height:20px;background:linear-gradient(90deg,#d9d9d9,#dcdcdc 60%,#e2e2e2)"></div>
<svg class="a" style="left:1795px;top:428px" width="80" height="50" viewBox="1795 228 80 50"><g fill="none" stroke="#2a86f7" stroke-width="1.8" stroke-linecap="round" stroke-linejoin="round"><path d="M1807.6 247.9H1806.4a2 2 0 0 0 -2 2V256.6a2 2 0 0 0 2 2H1813a2 2 0 0 0 2 -2V255.4"/><path d="M1808.7 254.2v-2.5l7.4 -7.4a1.75 1.75 0 0 1 2.5 2.5l-7.4 7.4z"/></g><g fill="none" stroke="#e84141" stroke-width="1.8"><path d="M1852.6 247.2H1869.4"/><path d="M1857.3 246.6v-.4a1.8 1.8 0 0 1 1.8 -1.8h2.8a1.8 1.8 0 0 1 1.8 1.8v.4"/><path d="M1855.7 249.4V257.6a2 2 0 0 0 2 2h6.6a2 2 0 0 0 2 -2V249.4"/><path d="M1859.1 251.2v5.4M1862.9 251.2v5.4" stroke-width="1.7"/></g></svg>
<div class="a" style="left:302px;top:873px;width:1599px;height:11px;background:#f1f1f1"></div>
<div class="a" style="left:302px;top:884px;width:1599px;height:1px;background:#e6e6e6"></div>
<div class="a" style="left:302px;top:873px;width:1439px;height:10px;background:#b3b3b3;border-radius:5px"></div>
<div class="a" style="left:312px;top:894px;line-height:44px;color:#555">Tổng số bản ghi: <b style="color:#222">5</b></div>
<div class="a" style="left:1590px;top:894px;width:107px;height:45px;background:#fff;border:1px solid #dedede;border-radius:5px"></div>
<div class="a" style="left:1606px;top:894px;line-height:45px;color:#262626">50</div>
<svg class="a" style="left:1660px;top:900px" width="30" height="30" viewBox="1660 900 30 30"><path d="M1670.2 913.1L1675.4 918.3 1680.6 913.1" fill="none" stroke="#444" stroke-width="2.3" stroke-linecap="round" stroke-linejoin="round"/></svg>
<div class="a" style="left:1717px;top:894px;line-height:45px;color:#555;letter-spacing:-1.6px">Từ</div>
<svg class="a" style="left:1738px;top:904px" width="16" height="22" viewBox="1738 904 16 22"><path d="M1747.9 921.7V908.7H1745.9L1742.4 911.2V913.6L1745.2 911.7V921.7Z" fill="#222"/></svg>
<div class="a" style="left:1755px;top:894px;line-height:45px;color:#555">đến</div>
<div class="a" style="left:1791px;top:894px;line-height:45px;color:#222;-webkit-text-stroke:0.7px #222">5</div>
<svg class="a" style="left:1810px;top:900px" width="70" height="30" viewBox="1810 900 70 30"><path d="M1824.8 908.5L1818.4 916 1824.8 923.5M1866.8 908.5L1873.2 916 1866.8 923.5" fill="none" stroke="#c2c2c2" stroke-width="2.2" stroke-linecap="round" stroke-linejoin="round"/></svg>
<div class="a" style="left:3px;top:372px;width:273px;height:63px;border:2px solid #ea3b40"></div>
<div class="a" style="left:3px;top:576px;width:273px;height:66px;border:2px solid #ea3b40"></div>
<div class="a" style="left:1316px;top:111px;width:237px;height:69px;border:2px solid #ea3b40"></div>
<div class="a badge" style="left:248px;top:362px"></div>
<svg class="a" style="left:258px;top:368px" width="20" height="30" viewBox="258 368 20 30"><path d="M269.5 371.9H272.3V393H269.5V375.7L263.3 378.3V375.3L269.3 371.9Z" fill="#fff"/></svg>
<div class="a badge" style="left:248px;top:556px">2</div>
<div class="a badge" style="left:1525px;top:91px">3</div>
</body></html>
